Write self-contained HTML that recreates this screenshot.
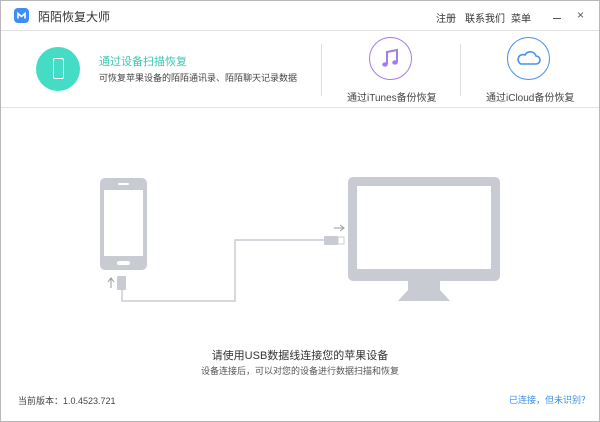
<!DOCTYPE html>
<html><head><meta charset="utf-8"><style>
*{margin:0;padding:0;box-sizing:border-box}
body{width:600px;height:422px;overflow:hidden;background:#fff;font-family:"Liberation Sans","Noto Sans CJK SC",sans-serif;position:relative}
.frame{position:absolute;left:0;top:0;width:600px;height:422px;border:1px solid #b8b8b8}
.t{position:absolute;white-space:nowrap}
</style></head><body>
<div class="frame"></div>
<!-- title bar -->
<div style="position:absolute;left:14px;top:8px;width:15px;height:15px;background:#3d8ef0;border-radius:4px"></div>
<svg style="position:absolute;left:14px;top:8px" width="15" height="15"><path d="M4 10.5 V5.5 L7.5 8.5 L11 5.5 V10.5" fill="none" stroke="#fff" stroke-width="1.6"/></svg>
<div class="t" style="left:38px;top:8px;font-size:12px;color:#333">陌陌恢复大师</div>
<div class="t" style="left:436px;top:10px;font-size:10px;color:#333">注册</div>
<div class="t" style="left:465px;top:10px;font-size:10px;color:#333">联系我们</div>
<div class="t" style="left:511px;top:10px;font-size:10px;color:#333">菜单</div>
<div style="position:absolute;left:553px;top:18px;width:8px;height:1px;background:#555"></div>
<div class="t" style="left:577px;top:8px;font-size:12px;color:#555">×</div>
<div style="position:absolute;left:1px;top:30px;width:598px;height:1px;background:#e2e2e2"></div>
<!-- header options -->
<div style="position:absolute;left:36px;top:47px;width:44px;height:44px;border-radius:50%;background:#44dcc4"></div>
<div style="position:absolute;left:53px;top:58px;width:11px;height:21px;border:1.5px solid #fff;border-radius:2px"></div>
<div class="t" style="left:99px;top:53px;font-size:11px;color:#3cc7b4">通过设备扫描恢复</div>
<div class="t" style="left:99px;top:71px;font-size:9px;color:#444">可恢复苹果设备的陌陌通讯录、陌陌聊天记录数据</div>
<div style="position:absolute;left:321px;top:44px;width:1px;height:52px;background:#ddd"></div>
<div style="position:absolute;left:369px;top:37px;width:43px;height:43px;border-radius:50%;border:1.5px solid #a57be8"></div>
<svg style="position:absolute;left:369px;top:37px" width="43" height="43"><path d="M18 27 V15 L28 13 V25" fill="none" stroke="#a57be8" stroke-width="2"/><ellipse cx="16" cy="27.5" rx="2.8" ry="2.2" fill="#a57be8"/><ellipse cx="26" cy="25.5" rx="2.8" ry="2.2" fill="#a57be8"/></svg>
<div class="t" style="left:347px;top:89px;font-size:10px;color:#444">通过iTunes备份恢复</div>
<div style="position:absolute;left:460px;top:44px;width:1px;height:52px;background:#ddd"></div>
<div style="position:absolute;left:507px;top:37px;width:43px;height:43px;border-radius:50%;border:1.5px solid #4a90e8"></div>
<svg style="position:absolute;left:507px;top:37px" width="43" height="43"><path d="M14 27 H29 A4 4 0 0 0 29 19 A6 6 0 0 0 18 18 A4.5 4.5 0 0 0 14 27 Z" fill="none" stroke="#4a90e8" stroke-width="1.6"/></svg>
<div class="t" style="left:486px;top:89px;font-size:10px;color:#444">通过iCloud备份恢复</div>
<div style="position:absolute;left:1px;top:107px;width:598px;height:1px;background:#e2e2e2"></div>
<!-- illustration -->
<svg style="position:absolute;left:0;top:0" width="600" height="422">
<g fill="#c8ccd2">
<rect x="100" y="178" width="47" height="92" rx="5"/>
<rect x="348" y="177" width="152" height="104" rx="5"/>
<path d="M408 280 H440 V290 L450 301 H398 L408 290 Z"/>
<rect x="117" y="276" width="9" height="14" rx="1"/>
<rect x="324" y="236" width="14" height="9" rx="1"/>
</g>
<rect x="104" y="190" width="39" height="66" fill="#fff"/>
<rect x="118" y="183" width="11" height="2" fill="#fff" rx="1"/>
<rect x="117" y="261" width="13" height="4" fill="#fff" rx="2"/>
<rect x="357" y="186" width="134" height="83" fill="#fff"/>
<rect x="338" y="237" width="6" height="7" fill="none" stroke="#c8ccd2"/>
<path d="M122 290 V301 H235 V240 H324" fill="none" stroke="#c8ccd2" stroke-width="1.5"/>
<path d="M111 288 V279 M108 282 L111 278 L114 282" stroke="#999" fill="none"/>
<path d="M334 228 H343 M340 225 L344 228 L340 231" stroke="#999" fill="none"/>
</svg>
<div class="t" style="left:0;width:600px;text-align:center;top:347px;font-size:11px;color:#333">请使用USB数据线连接您的苹果设备</div>
<div class="t" style="left:0;width:600px;text-align:center;top:364px;font-size:9px;color:#555">设备连接后，可以对您的设备进行数据扫描和恢复</div>
<div class="t" style="left:18px;top:394px;font-size:9px;color:#444">当前版本：1.0.4523.721</div>
<div class="t" style="left:509px;top:393px;font-size:9px;color:#3a8ee6">已连接，但未识别？</div>
</body></html>
